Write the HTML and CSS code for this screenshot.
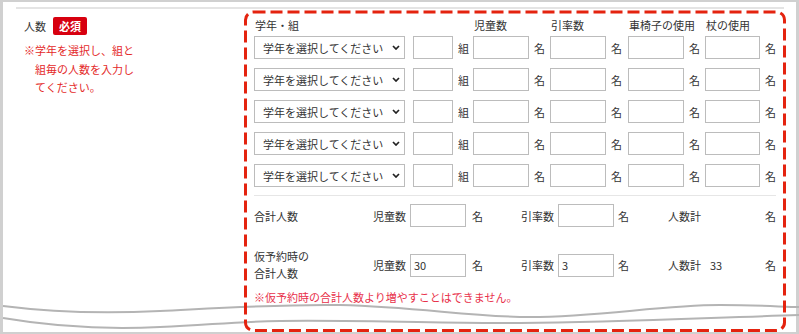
FILE: index.html
```html
<!DOCTYPE html>
<html lang="ja">
<head>
    <meta charset="UTF-8">
    <meta name="viewport" content="width=device-width, initial-scale=1.0">
    <title>人数</title>
    <link rel="stylesheet" href="styles.css">
</head>
<body>
    <div class="shot">
        <div class="frame">
            <div class="form-row">
                <div class="form-label">
                    <div class="label-line">
                        <span>人数</span>
                        <span class="badge">必須</span>
                    </div>
                    <p class="note">※学年を選択し、組と組毎の人数を入力してください。</p>
                </div>

                <div class="form-body">
                    <div class="grade-head">
                        <span>学年・組</span>
                        <span></span>
                        <span>児童数</span>
                        <span>引率数</span>
                        <span>車椅子の使用</span>
                        <span>杖の使用</span>
                    </div>

                    <div class="grade-list">
                        <div class="grade-row">
                            <select><option>学年を選択してください</option></select>
                            <div class="field"><input class="num-s" type="text"><span class="unit">組</span></div>
                            <div class="field"><input class="num" type="text"><span class="unit">名</span></div>
                            <div class="field"><input class="num" type="text"><span class="unit">名</span></div>
                            <div class="field"><input class="num" type="text"><span class="unit">名</span></div>
                            <div class="field"><input class="num num-last" type="text"><span class="unit">名</span></div>
                        </div>
                        <div class="grade-row">
                            <select><option>学年を選択してください</option></select>
                            <div class="field"><input class="num-s" type="text"><span class="unit">組</span></div>
                            <div class="field"><input class="num" type="text"><span class="unit">名</span></div>
                            <div class="field"><input class="num" type="text"><span class="unit">名</span></div>
                            <div class="field"><input class="num" type="text"><span class="unit">名</span></div>
                            <div class="field"><input class="num num-last" type="text"><span class="unit">名</span></div>
                        </div>
                        <div class="grade-row">
                            <select><option>学年を選択してください</option></select>
                            <div class="field"><input class="num-s" type="text"><span class="unit">組</span></div>
                            <div class="field"><input class="num" type="text"><span class="unit">名</span></div>
                            <div class="field"><input class="num" type="text"><span class="unit">名</span></div>
                            <div class="field"><input class="num" type="text"><span class="unit">名</span></div>
                            <div class="field"><input class="num num-last" type="text"><span class="unit">名</span></div>
                        </div>
                        <div class="grade-row">
                            <select><option>学年を選択してください</option></select>
                            <div class="field"><input class="num-s" type="text"><span class="unit">組</span></div>
                            <div class="field"><input class="num" type="text"><span class="unit">名</span></div>
                            <div class="field"><input class="num" type="text"><span class="unit">名</span></div>
                            <div class="field"><input class="num" type="text"><span class="unit">名</span></div>
                            <div class="field"><input class="num num-last" type="text"><span class="unit">名</span></div>
                        </div>
                        <div class="grade-row">
                            <select><option>学年を選択してください</option></select>
                            <div class="field"><input class="num-s" type="text"><span class="unit">組</span></div>
                            <div class="field"><input class="num" type="text"><span class="unit">名</span></div>
                            <div class="field"><input class="num" type="text"><span class="unit">名</span></div>
                            <div class="field"><input class="num" type="text"><span class="unit">名</span></div>
                            <div class="field"><input class="num num-last" type="text"><span class="unit">名</span></div>
                        </div>
                    </div>

                    <div class="divider"></div>

                    <div class="sum-row">
                        <span>合計人数</span>
                        <span>児童数</span>
                        <input class="num" type="text">
                        <span class="unit-cell">名</span>
                        <span>引率数</span>
                        <input class="num" type="text">
                        <span class="unit-cell unit-cell-b">名</span>
                        <span>人数計</span>
                        <span></span>
                        <span>名</span>
                    </div>

                    <div class="sum-row sum-row-tmp">
                        <span class="two-line">仮予約時の<br>合計人数</span>
                        <span>児童数</span>
                        <input class="num" type="text" value="30">
                        <span class="unit-cell">名</span>
                        <span>引率数</span>
                        <input class="num" type="text" value="3">
                        <span class="unit-cell unit-cell-b">名</span>
                        <span>人数計</span>
                        <span>33</span>
                        <span>名</span>
                    </div>

                    <p class="warning">※仮予約時の合計人数より増やすことはできません。</p>
                </div>
            </div>
        </div>

        <svg class="overlay" width="799" height="334" viewBox="0 0 799 334">
            <path class="wave" d="M3,306 C50,312 100,314 160,311 C220,308 280,304 340,305 C420,307 470,317 530,317 C600,317 660,305 720,305 C760,305 785,307 799,307"/>
            <path class="wave" d="M3,318 C50,326 100,330 160,327 C210,325 230,322 280,321 C380,320 450,324 520,323 C620,322 700,318 799,315"/>
            <rect class="highlight" x="245.5" y="12" width="539" height="318.5" rx="8"/>
        </svg>
    </div>
</body>
</html>
```

FILE: styles.css
```css
body {
    margin: 0;
    font-family: "Noto Sans CJK JP", "Noto Sans", sans-serif;
    font-size: 11px;
    color: #333;
    background-color: #fff;
}
.shot {
    position: relative;
    width: 799px;
    height: 334px;
}
.frame {
    box-sizing: border-box;
    width: 799px;
    height: 334px;
    border: 3px solid #d0d0d0;
    border-top-width: 2px;
    border-bottom-width: 2px;
    padding: 5px 12px 0 13px;
    overflow: hidden;
}
.form-row {
    display: flex;
    border-top: 2px solid #e4e4e4;
}
.form-label {
    width: 230px;
    padding: 8px 0 0 8px;
}
.label-line {
    display: flex;
    align-items: center;
    height: 18px;
}
.badge {
    margin-left: 7px;
    padding: 0 6px;
    line-height: 18px;
    background-color: #d7000f;
    color: #fff;
    font-weight: bold;
    border-radius: 2px;
}
.note {
    margin: 6px 0 0;
    width: 104px;
    padding-left: 11px;
    text-indent: -11px;
    line-height: 18.5px;
    color: #e42a2a;
}
.form-body {
    padding-top: 8px;
}
.grade-head,
.grade-row {
    display: grid;
    grid-template-columns: 159px 60px 77px 78px 77px 70px;
}
.grade-head {
    line-height: 16px;
    margin-bottom: 3px;
}
.grade-head span {
    padding-left: 1px;
}
.grade-list {
    display: flex;
    flex-direction: column;
    gap: 9px;
}
.grade-row {
    align-items: center;
    height: 23px;
}
.field {
    display: flex;
    align-items: center;
}
.unit {
    margin-left: 5px;
}
select,
input {
    box-sizing: border-box;
    height: 23px;
    margin: 0;
    border: 1px solid #bcbcbc;
    border-radius: 0;
    background-color: #fff;
    font: inherit;
    color: #333;
    outline: none;
}
select {
    width: 151px;
    padding: 0 0 0 8px;
    appearance: none;
    background: #fff url("data:image/svg+xml,%3Csvg xmlns='http://www.w3.org/2000/svg' width='8' height='5' viewBox='0 0 8 5'%3E%3Cpath d='M1 1l3 3 3-3' fill='none' stroke='%23222' stroke-width='1.7'/%3E%3C/svg%3E") no-repeat right 4px center;
}
input {
    padding: 0 3px;
}
.num-s {
    width: 40px;
}
.num {
    width: 56px;
}
.num-last {
    width: 55px;
}
.divider {
    width: 522px;
    margin-top: 8px;
    border-top: 1px solid #e6e6e6;
}
.sum-row {
    display: grid;
    grid-template-columns: 119px 37px 56px 55px 37px 56px 54px 42px 55px auto;
    align-items: center;
    margin-top: 8px;
    min-height: 23px;
}
.sum-row-tmp {
    margin-top: 21px;
}
.two-line {
    line-height: 17px;
}
.unit-cell {
    padding-left: 6px;
}
.unit-cell-b {
    padding-left: 4px;
}
.warning {
    margin: 7px 0 0;
    line-height: 16px;
    color: #e8304a;
}
.overlay {
    position: absolute;
    top: 0;
    left: 0;
    pointer-events: none;
}
.wave {
    fill: none;
    stroke: #b4b4b4;
    stroke-width: 2;
}
.highlight {
    fill: none;
    stroke: #e4230f;
    stroke-width: 3;
    stroke-dasharray: 12 5;
}
```
